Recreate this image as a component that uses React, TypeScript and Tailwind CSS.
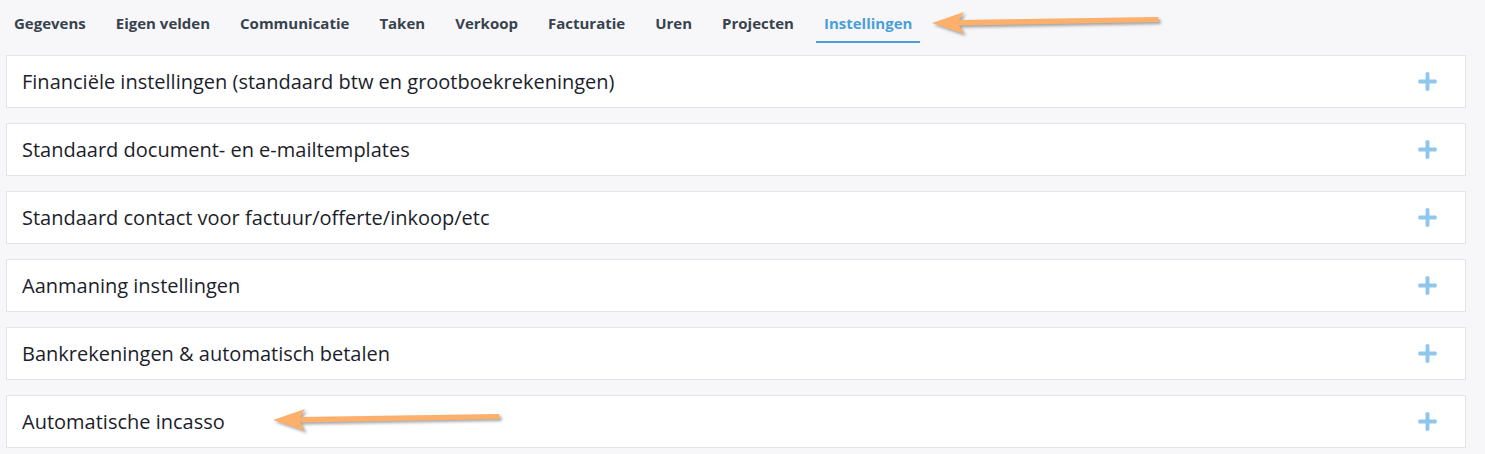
import { FaPlus } from "react-icons/fa";

const tabs = [
  "Gegevens",
  "Eigen velden",
  "Communicatie",
  "Taken",
  "Verkoop",
  "Facturatie",
  "Uren",
  "Projecten",
  "Instellingen",
];

const sections = [
  "Financiële instellingen (standaard btw en grootboekrekeningen)",
  "Standaard document- en e-mailtemplates",
  "Standaard contact voor factuur/offerte/inkoop/etc",
  "Aanmaning instellingen",
  "Bankrekeningen & automatisch betalen",
  "Automatische incasso",
];

// orange annotation arrow, tip on the left
const Arrow = ({ className }: { className: string }) => (
  <svg
    className={"absolute drop-shadow-[2px_2px_1.5px_rgba(0,0,0,0.35)] " + className}
    width="236"
    height="32"
    viewBox="0 0 236 32"
  >
    <polygon
      points="4,15 36,4 31,12 230,9 231,14 31,17.5 36,26"
      fill="#fdb06b"
    />
  </svg>
);

const Panel = ({ title, children }: { title: string; children?: React.ReactNode }) => (
  <div className="relative flex h-[53px] items-center justify-between border border-[#e4e4e7] bg-white pl-[15px] pr-[27px] mb-[15px]">
    <span className="text-[20px] text-[#1c1e2c]">{title}</span>
    <FaPlus className="text-[21px] text-[#8ec6ec]" />
    {children}
  </div>
);

export default function App() {
  return (
    <div
      className="relative min-h-[454px] bg-[#f7f7f9] pl-[6px] pr-[19px] pt-[5px]"
      style={{ fontFamily: '"Open Sans", "Noto Sans", sans-serif' }}
    >
      <nav className="flex gap-[14px]">
        {tabs.map((t) => {
          const active = t === "Instellingen";
          return (
            <div
              key={t}
              className={
                active
                  ? "border-b-2 border-[#4a9dd7] px-2 py-2 text-[15px] font-bold leading-5 text-[#4a9fd8]"
                  : "border-b-2 border-transparent px-2 py-2 text-[15px] font-bold leading-5 text-[#38424e]"
              }
            >
              {t}
            </div>
          );
        })}
      </nav>
      <Arrow className="left-[928px] top-[8px]" />

      <div className="mt-3">
        {sections.map((s, i) => (
          <Panel key={s} title={s}>
            {i === sections.length - 1 && <Arrow className="left-[262px] top-[9px]" />}
          </Panel>
        ))}
      </div>
    </div>
  );
}
